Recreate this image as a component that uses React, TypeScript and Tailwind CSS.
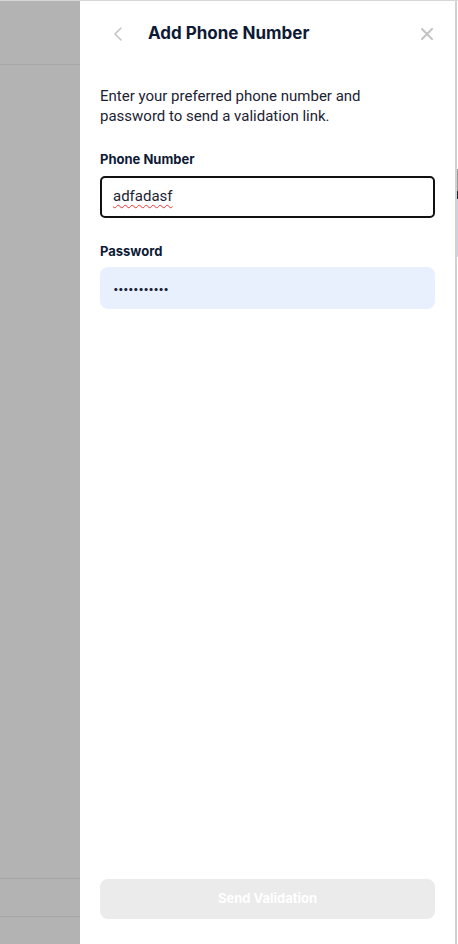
import { ChevronLeft, X } from 'lucide-react';

export default function App() {
  return (
    <div className="flex h-[944px] w-[458px] overflow-hidden bg-white font-['Inter',sans-serif] border-t border-[#d6d6d6]">
      {/* dimmed page behind */}
      <div className="flex w-[80px] shrink-0 flex-col bg-[#b3b3b3]">
        <div className="h-[64px] border-b border-[#a6a6a6]" />
        <div className="flex-1" />
        <div className="h-[39px] border-t border-b border-[#a6a6a6]" />
        <div className="h-[27px]" />
      </div>

      {/* drawer */}
      <div className="flex w-[375px] shrink-0 flex-col px-5 pb-[25px]">
        <div className="flex h-[66px] items-center">
          <button className="ml-[6px] flex h-6 w-6 items-center justify-center text-[#c4c4c4]">
            <ChevronLeft size={26} strokeWidth={1.6} />
          </button>
          <h1 className="ml-[18px] text-[17px] font-bold text-[#0e1a35]">Add Phone Number</h1>
          <button className="ml-auto mr-[-4px] flex h-6 w-6 items-center justify-center text-[#c4c4c4]">
            <X size={20} strokeWidth={2.5} />
          </button>
        </div>

        <p className="mt-[19px] max-w-[290px] font-['Roboto',sans-serif] text-[15px] leading-[20px] text-[#1c2333]">
          Enter your preferred phone number and password to send a validation link.
        </p>

        <label className="mt-[24px] text-[13px] font-bold text-[#0e1a35]">Phone Number</label>
        <div className="mt-[6px] flex h-[42px] items-center rounded-[5px] border-2 border-[#111111] px-[11px]">
          <span className="text-[15px] text-[#1c2333] font-['Roboto',sans-serif] underline decoration-wavy decoration-[#e33] decoration-1 underline-offset-[3px]">
            adfadasf
          </span>
        </div>

        <label className="mt-[24px] text-[13px] font-bold text-[#0e1a35]">Password</label>
        <div className="mt-[6px] flex h-[42px] items-center rounded-[8px] bg-[#e8f0fe] px-[13px]">
          <span className="text-[10px] tracking-[-0.6px] text-[#1c2333]">•••••••••••</span>
        </div>

        <div className="flex-1" />

        <button className="flex h-[40px] items-center justify-center rounded-[8px] bg-[#ebebeb] text-[13px] font-bold text-white">
          Send Validation
        </button>
      </div>

      {/* edge of page behind */}
      <div className="flex w-[3px] shrink-0 flex-col border-l-2 border-[#d2d2d2]">
        <div className="h-[168px]" />
        <div className="h-[22px] bg-[#9a9a9a]" />
        <div className="h-[8px] bg-[#1c2333]" />
        <div className="h-[58px] bg-[#c9d6ec]" />
      </div>
    </div>
  );
}
